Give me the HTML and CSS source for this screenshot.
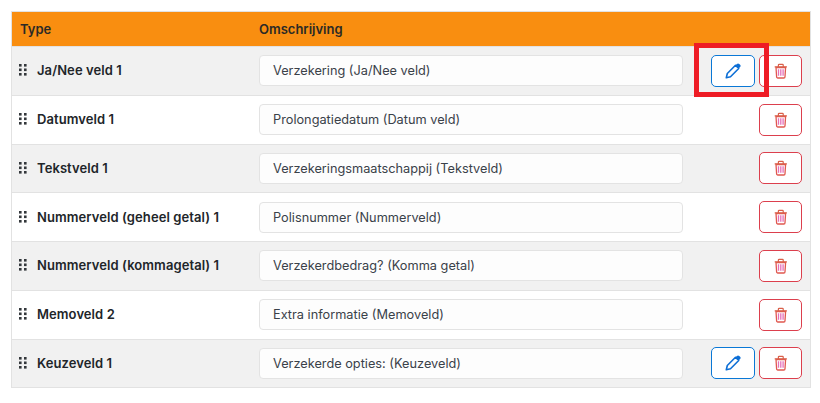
FILE: index.html
```html
<!DOCTYPE html>
<html lang="nl">
<head>
  <meta charset="UTF-8" />
  <title>Velden</title>
  <link rel="stylesheet" href="styles.css">
</head>
<body>
  <div class="highlight"></div>

  <main class="fields">
    <div class="fields-head">
      <div class="col-type">Type</div>
      <div class="col-desc">Omschrijving</div>
    </div>

    <!-- Ja/Nee -->
    <div class="row odd">
      <div class="col-type">
        <svg class="grip" viewBox="0 0 8 12"><use href="#grip"/></svg>
        <b>Ja/Nee veld 1</b>
      </div>
      <div class="col-desc"><input type="text" value="Verzekering (Ja/Nee veld)"></div>
      <div class="col-actions">
        <button class="btn btn-edit"><svg viewBox="0 0 16 16"><use href="#pencil"/></svg></button>
        <button class="btn btn-del"><svg viewBox="0 0 16 16"><use href="#trash"/></svg></button>
      </div>
    </div>

    <!-- Datum -->
    <div class="row">
      <div class="col-type">
        <svg class="grip" viewBox="0 0 8 12"><use href="#grip"/></svg>
        <b>Datumveld 1</b>
      </div>
      <div class="col-desc"><input type="text" value="Prolongatiedatum (Datum veld)"></div>
      <div class="col-actions">
        <button class="btn btn-del"><svg viewBox="0 0 16 16"><use href="#trash"/></svg></button>
      </div>
    </div>

    <!-- Tekst -->
    <div class="row odd">
      <div class="col-type">
        <svg class="grip" viewBox="0 0 8 12"><use href="#grip"/></svg>
        <b>Tekstveld 1</b>
      </div>
      <div class="col-desc"><input type="text" value="Verzekeringsmaatschappij (Tekstveld)"></div>
      <div class="col-actions">
        <button class="btn btn-del"><svg viewBox="0 0 16 16"><use href="#trash"/></svg></button>
      </div>
    </div>

    <!-- Nummer -->
    <div class="row">
      <div class="col-type">
        <svg class="grip" viewBox="0 0 8 12"><use href="#grip"/></svg>
        <b>Nummerveld (geheel getal) 1</b>
      </div>
      <div class="col-desc"><input type="text" value="Polisnummer (Nummerveld)"></div>
      <div class="col-actions">
        <button class="btn btn-del"><svg viewBox="0 0 16 16"><use href="#trash"/></svg></button>
      </div>
    </div>

    <!-- Komma -->
    <div class="row odd">
      <div class="col-type">
        <svg class="grip" viewBox="0 0 8 12"><use href="#grip"/></svg>
        <b>Nummerveld (kommagetal) 1</b>
      </div>
      <div class="col-desc"><input type="text" value="Verzekerdbedrag? (Komma getal)"></div>
      <div class="col-actions">
        <button class="btn btn-del"><svg viewBox="0 0 16 16"><use href="#trash"/></svg></button>
      </div>
    </div>

    <!-- Memo -->
    <div class="row">
      <div class="col-type">
        <svg class="grip" viewBox="0 0 8 12"><use href="#grip"/></svg>
        <b>Memoveld 2</b>
      </div>
      <div class="col-desc"><input type="text" value="Extra informatie (Memoveld)"></div>
      <div class="col-actions">
        <button class="btn btn-del"><svg viewBox="0 0 16 16"><use href="#trash"/></svg></button>
      </div>
    </div>

    <!-- Keuze -->
    <div class="row odd">
      <div class="col-type">
        <svg class="grip" viewBox="0 0 8 12"><use href="#grip"/></svg>
        <b>Keuzeveld 1</b>
      </div>
      <div class="col-desc"><input type="text" value="Verzekerde opties: (Keuzeveld)"></div>
      <div class="col-actions">
        <button class="btn btn-edit"><svg viewBox="0 0 16 16"><use href="#pencil"/></svg></button>
        <button class="btn btn-del"><svg viewBox="0 0 16 16"><use href="#trash"/></svg></button>
      </div>
    </div>
  </main>

  <svg class="sprite" width="0" height="0">
    <symbol id="grip" viewBox="0 0 8 12">
      <rect x="0" y="0" width="2.6" height="2.6"/><rect x="5" y="0" width="2.6" height="2.6"/>
      <rect x="0" y="4.5" width="2.6" height="2.6"/><rect x="5" y="4.5" width="2.6" height="2.6"/>
      <rect x="0" y="9" width="2.6" height="2.6"/><rect x="5" y="9" width="2.6" height="2.6"/>
    </symbol>
    <symbol id="pencil" viewBox="0 0 16 16">
      <path d="M1.300 14.700l1-4.200L10.500 2.300l3.200 3.200-8.200 8.200z" fill="none" stroke="#0d6fd6" stroke-width="1.600" stroke-linejoin="round"/>
      <path d="M10.200 2.600l1.700-1.700c.7-.7 1.600-.7 2.300 0l.9.900c.7.700.7 1.600 0 2.300l-1.700 1.700z" fill="#0d6fd6"/>
    </symbol>
    <symbol id="trash" viewBox="0 0 16 16">
      <path d="M3 4.500h9.600l-.6 9.300c0 .7-.5 1.200-1.200 1.200H4.800c-.7 0-1.200-.5-1.200-1.200z" fill="none" stroke="#e0584f" stroke-width="1.300"/>
      <path d="M1.700 3.800h12.200M5.400 3.500V2c0-.4.3-.7.7-.7h3.400c.4 0 .7.300.7.700v1.500" fill="none" stroke="#d9604a" stroke-width="1.200"/>
      <path d="M5.500 6.300v6.500M7.800 6.300v6.500M10.100 6.300v6.500" fill="none" stroke="#e56fb8" stroke-width="1.300"/>
    </symbol>
  </svg>
</body>
</html>
```

FILE: styles.css
```css
:root {
  --orange: #f98e10;
  --line: #e2e2e2;
  --stripe: #f1f1f1;
  --text: #212529;
}

body {
  margin: 0;
  font-family: Inter, sans-serif;
  font-size: 13px;
  color: var(--text);
  background-color: white;
}

.fields {
  margin: 11px 9px 0 11px;
  border: 1px solid var(--line);
}

.fields-head {
  display: flex;
  align-items: center;
  height: 34px;
  background-color: var(--orange);
  font-weight: 600;
  font-size: 13px;
  color: #2b2a26;
}

.fields-head .col-type {
  padding-left: 8px;
}

.row {
  display: flex;
  align-items: center;
  height: 47.76px;
  border-top: 1px solid var(--line);
  background-color: white;
}

.row.odd {
  background-color: var(--stripe);
}

.col-type {
  width: 247px;
  flex: none;
  box-sizing: border-box;
  padding-left: 7px;
  padding-bottom: 1px;
  display: flex;
  align-items: center;
}

.col-type b {
  font-weight: 600;
  letter-spacing: 0.08px;
}

.grip {
  width: 8px;
  height: 12px;
  margin-right: 10px;
  fill: #33373b;
}

.col-desc {
  width: 424px;
  flex: none;
}

.col-desc input {
  display: block;
  width: 100%;
  height: 31px;
  box-sizing: border-box;
  padding: 0 13px;
  border: 1px solid #e3e3e3;
  border-radius: 4px;
  background-color: #fdfdfd;
  font-family: inherit;
  font-size: 12.75px;
  color: #3a4149;
}

.col-actions {
  flex: 1;
  display: flex;
  justify-content: flex-end;
  gap: 4px;
  padding-right: 8px;
}

.btn {
  height: 32px;
  padding: 0;
  background-color: white;
  border-radius: 5px;
  display: flex;
  align-items: center;
  justify-content: center;
}

.btn-edit {
  width: 44px;
  border: 1.5px solid #0a78d6;
}

.btn-del {
  width: 43px;
  border: 1.5px solid #dc3f4d;
}

.btn svg {
  width: 16px;
  height: 16px;
}

.sprite {
  position: absolute;
}

/* rode markering over de knop */
.highlight {
  position: absolute;
  left: 694px;
  top: 43px;
  width: 65px;
  height: 44px;
  border: 5px solid #ee1c25;
  z-index: 10;
}
```
